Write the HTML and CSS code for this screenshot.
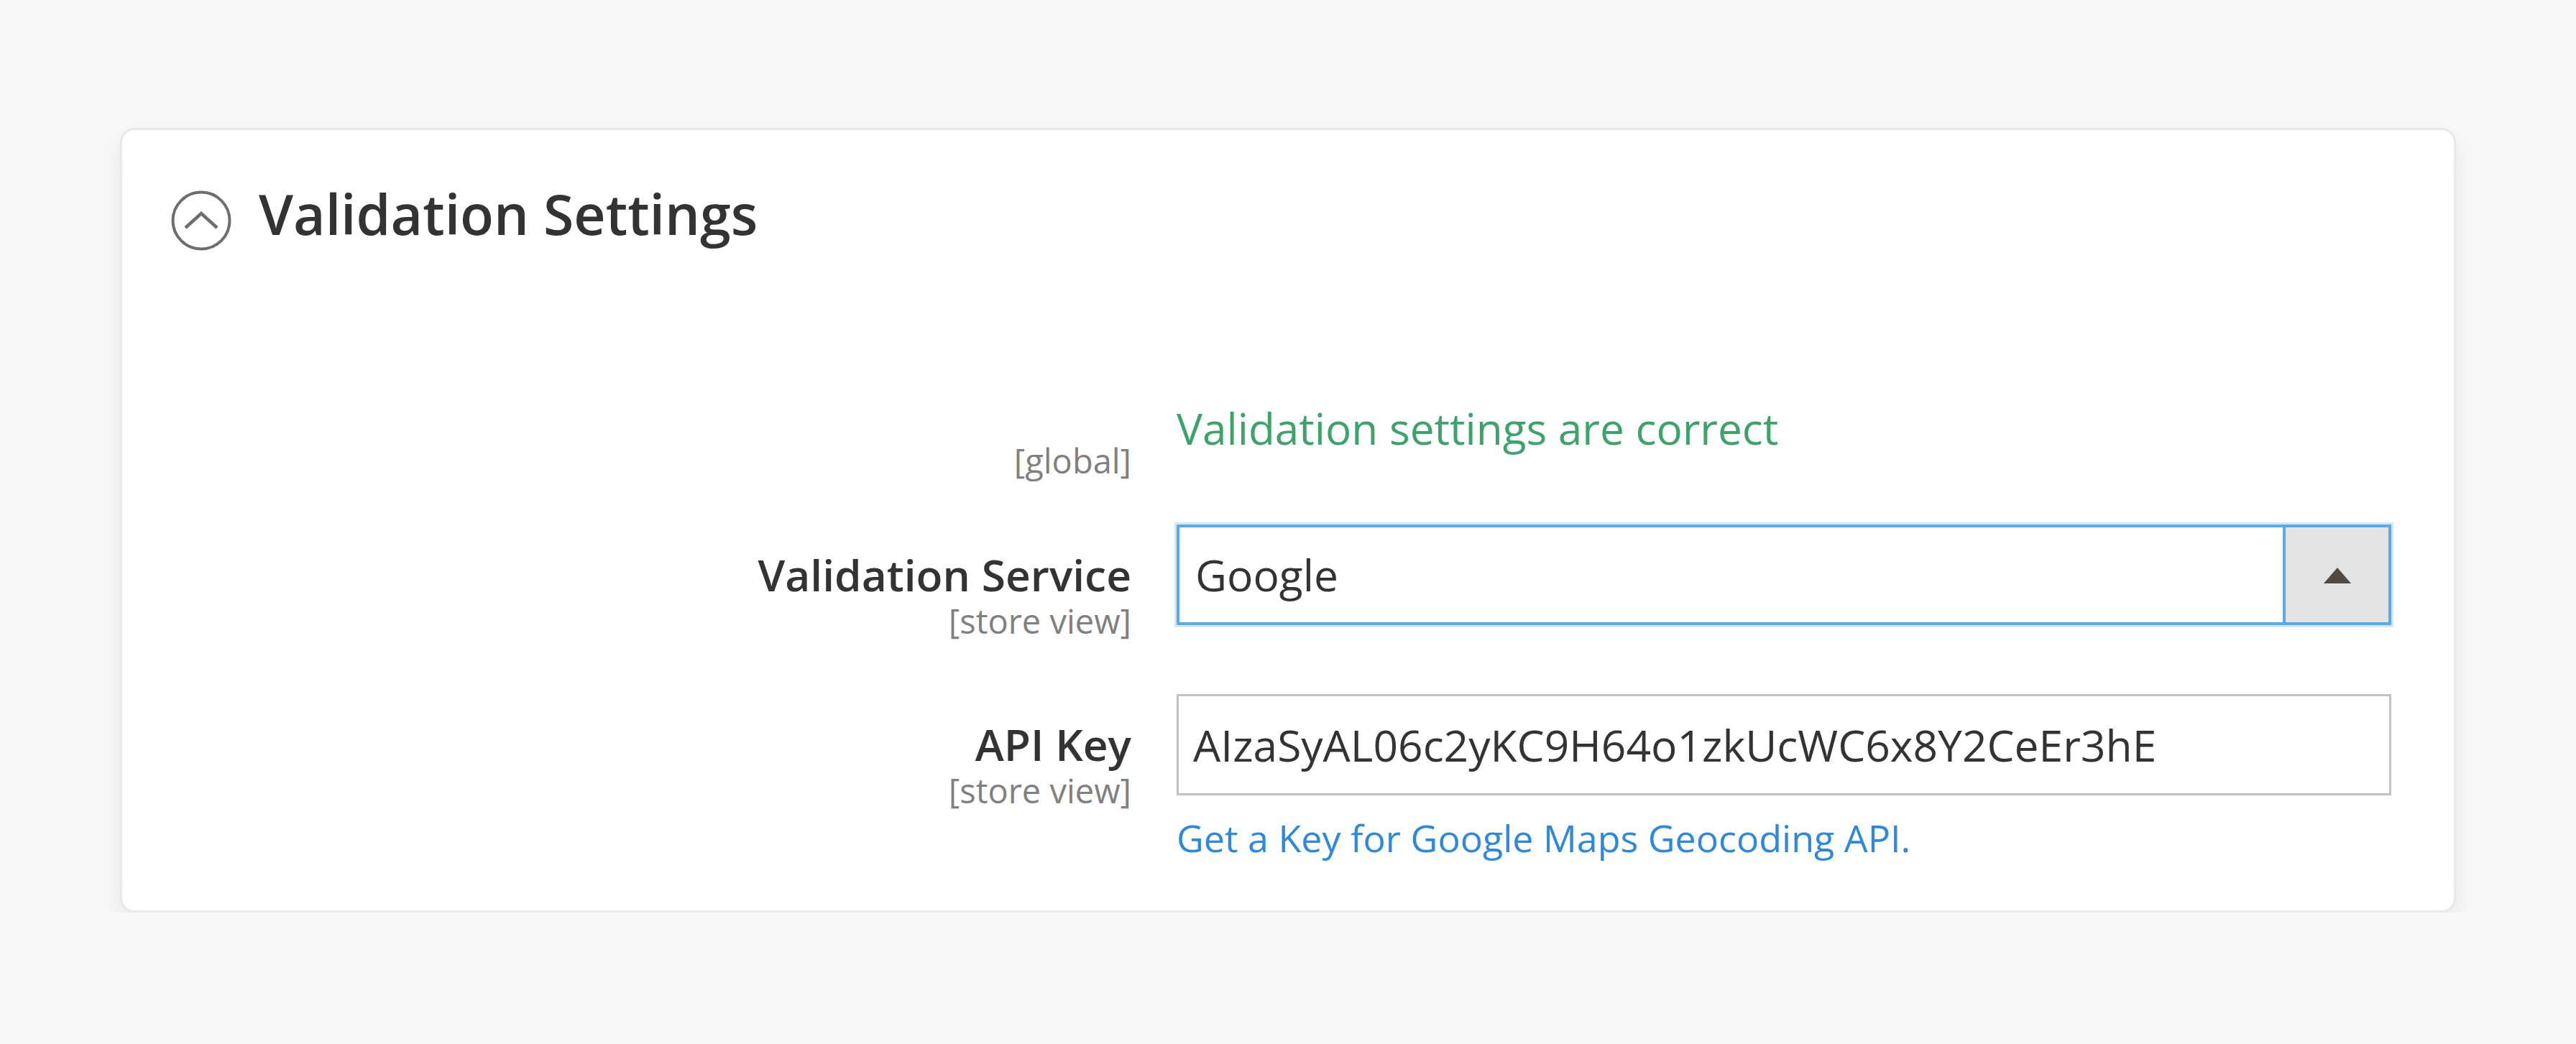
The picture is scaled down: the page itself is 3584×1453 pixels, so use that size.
FILE: index.html
```html
<!DOCTYPE html>
<html lang="en">
<head>
  <meta charset="UTF-8" />
  <title>Validation Settings</title>
  <link rel="stylesheet" href="styles.css">
</head>
<body>
  <div class="settings-card">
    <div class="section-header">
      <span class="collapse-icon">
        <svg width="84" height="84" viewBox="0 0 84 84">
          <circle cx="42" cy="42" r="39.5" fill="none" stroke="#6e6e6e" stroke-width="4" />
          <polyline points="20,52 42,32 64,52" fill="none" stroke="#6e6e6e" stroke-width="4.5" />
        </svg>
      </span>
      <h2 class="section-title">Validation Settings</h2>
    </div>

    <div class="field-row row-status">
      <div class="field-label">
        <span class="scope">[global]</span>
      </div>
      <div class="field-control">
        <p class="status-ok">Validation settings are correct</p>
      </div>
    </div>

    <div class="field-row row-service">
      <div class="field-label">
        <label for="service">Validation Service</label>
        <span class="scope">[store view]</span>
      </div>
      <div class="field-control">
        <div class="select-box" id="service">
          <span class="select-value">Google</span>
          <span class="select-toggle"><span class="arrow-up"></span></span>
        </div>
      </div>
    </div>

    <div class="field-row row-key">
      <div class="field-label">
        <label for="apiKey">API Key</label>
        <span class="scope">[store view]</span>
      </div>
      <div class="field-control">
        <input type="text" id="apiKey" class="text-input" value="AIzaSyAL06c2yKC9H64o1zkUcWC6x8Y2CeEr3hE" />
        <a class="note-link" href="#">Get a Key for Google Maps Geocoding API.</a>
      </div>
    </div>
  </div>
</body>
</html>
```

FILE: styles.css
```css
/* Reset and base */
* {
  box-sizing: border-box;
  margin: 0;
  padding: 0;
  font-family: 'Open Sans', 'Liberation Sans', sans-serif;
}

body {
  background: #f8f8f8;
  padding: 178px 167px 0;
  color: #303030;
}

.settings-card {
  background: #fff;
  border: 3px solid #e9e9e9;
  border-radius: 20px;
  box-shadow: 0 14px 34px rgba(0, 0, 0, 0.07);
  padding: 84px 87px 73px 68px;
  height: 1092px;
}

.section-header {
  display: flex;
  align-items: flex-start;
  gap: 38px;
  height: 84px;
}

.collapse-icon {
  display: block;
  width: 84px;
  height: 84px;
}

.collapse-icon svg {
  display: block;
}

.section-title {
  font-size: 77px;
  line-height: 66px;
  font-weight: 600;
  color: #333;
}

.field-row {
  display: grid;
  grid-template-columns: 1336px 1690px;
  column-gap: 63px;
}

.field-label {
  display: flex;
  flex-direction: column;
  align-items: flex-end;
  text-align: right;
}

.field-label label {
  font-size: 60.5px;
  line-height: 66px;
  font-weight: 600;
  color: #333;
}

.scope {
  font-size: 47px;
  line-height: 56px;
  color: #808080;
}

.row-status {
  margin-top: 204px;
}

.row-status .field-label {
  padding-top: 60px;
}

.status-ok {
  font-size: 60.3px;
  line-height: 86px;
  color: #3ca36b;
}

.row-service {
  margin-top: 61px;
}

.row-service .field-label,
.row-key .field-label {
  padding-top: 37px;
}

.row-service .scope,
.row-key .scope {
  margin-top: 3px;
}

.row-key {
  margin-top: 74px;
}

.select-box {
  display: flex;
  height: 140px;
  border: 4px solid #5aa9e8;
  box-shadow: 0 0 0 3px #d3e7f8;
  background: #fff;
}

.select-value {
  flex: 1;
  font-size: 60.5px;
  line-height: 132px;
  padding-left: 22px;
  color: #333;
}

.select-toggle {
  width: 147px;
  background: #e3e3e3;
  border-left: 4px solid #5aa9e8;
  display: flex;
  align-items: center;
  justify-content: center;
}

.arrow-up {
  width: 0;
  height: 0;
  border-left: 19px solid transparent;
  border-right: 19px solid transparent;
  border-bottom: 22px solid #514943;
  margin-top: 2px;
}

.text-input {
  display: block;
  width: 100%;
  height: 141px;
  border: 3px solid #c2c2c2;
  padding: 0 20px;
  font-size: 60.5px;
  color: #333;
  background: #fff;
  outline: none;
}

.note-link {
  display: block;
  margin-top: 28px;
  font-size: 52px;
  line-height: 62px;
  color: #2e88dc;
  text-decoration: none;
}

.note-link:hover {
  text-decoration: underline;
}
```
